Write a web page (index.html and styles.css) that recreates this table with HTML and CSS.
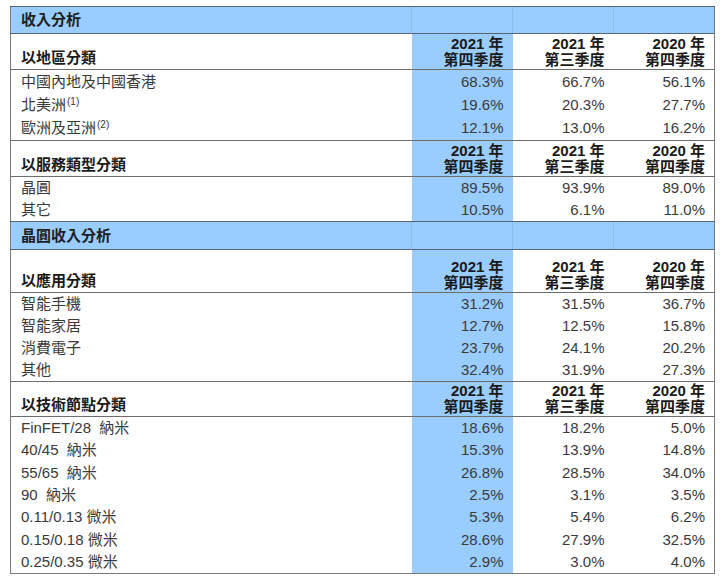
FILE: index.html
```html
<!DOCTYPE html>
<html lang="zh-Hant">
<head>
<meta charset="utf-8">
<title>收入分析</title>
<link rel="stylesheet" href="styles.css">
</head>
<body>
<table class="rev">
  <colgroup>
    <col class="c-label">
    <col class="c-num">
    <col class="c-num">
    <col class="c-num">
  </colgroup>
  <tr class="title t1"><td>收入分析</td><td class="hl"></td><td></td><td></td></tr>
  <tr class="head hd1"><th>以地區分類</th><th class="hl">2021 年<br>第四季度</th><th>2021 年<br>第三季度</th><th>2020 年<br>第四季度</th></tr>
  <tr class="row r1"><td>中國內地及中國香港</td><td class="hl">68.3%</td><td>66.7%</td><td>56.1%</td></tr>
  <tr class="row r1"><td>北美洲<sup>(1)</sup></td><td class="hl">19.6%</td><td>20.3%</td><td>27.7%</td></tr>
  <tr class="row r1"><td>歐洲及亞洲<sup>(2)</sup></td><td class="hl">12.1%</td><td>13.0%</td><td>16.2%</td></tr>
  <tr class="head hd2"><th>以服務類型分類</th><th class="hl">2021 年<br>第四季度</th><th>2021 年<br>第三季度</th><th>2020 年<br>第四季度</th></tr>
  <tr class="row r2"><td>晶圓</td><td class="hl">89.5%</td><td>93.9%</td><td>89.0%</td></tr>
  <tr class="row r2"><td>其它</td><td class="hl">10.5%</td><td>6.1%</td><td>11.0%</td></tr>
  <tr class="title t2"><td>晶圓收入分析</td><td class="hl"></td><td></td><td></td></tr>
  <tr class="head hd3"><th>以應用分類</th><th class="hl">2021 年<br>第四季度</th><th>2021 年<br>第三季度</th><th>2020 年<br>第四季度</th></tr>
  <tr class="row r3"><td>智能手機</td><td class="hl">31.2%</td><td>31.5%</td><td>36.7%</td></tr>
  <tr class="row r3"><td>智能家居</td><td class="hl">12.7%</td><td>12.5%</td><td>15.8%</td></tr>
  <tr class="row r3"><td>消費電子</td><td class="hl">23.7%</td><td>24.1%</td><td>20.2%</td></tr>
  <tr class="row r3"><td>其他</td><td class="hl">32.4%</td><td>31.9%</td><td>27.3%</td></tr>
  <tr class="head hd4"><th>以技術節點分類</th><th class="hl">2021 年<br>第四季度</th><th>2021 年<br>第三季度</th><th>2020 年<br>第四季度</th></tr>
  <tr class="row r4"><td>FinFET/28&nbsp; 納米</td><td class="hl">18.6%</td><td>18.2%</td><td>5.0%</td></tr>
  <tr class="row r4"><td>40/45&nbsp; 納米</td><td class="hl">15.3%</td><td>13.9%</td><td>14.8%</td></tr>
  <tr class="row r4"><td>55/65&nbsp; 納米</td><td class="hl">26.8%</td><td>28.5%</td><td>34.0%</td></tr>
  <tr class="row r4"><td>90&nbsp; 納米</td><td class="hl">2.5%</td><td>3.1%</td><td>3.5%</td></tr>
  <tr class="row r4"><td>0.11/0.13 微米</td><td class="hl">5.3%</td><td>5.4%</td><td>6.2%</td></tr>
  <tr class="row r4"><td>0.15/0.18 微米</td><td class="hl">28.6%</td><td>27.9%</td><td>32.5%</td></tr>
  <tr class="row r4"><td>0.25/0.35 微米</td><td class="hl">2.9%</td><td>3.0%</td><td>4.0%</td></tr>
</table>
</body>
</html>
```

FILE: styles.css
```css
html, body {
  margin: 0;
  padding: 0;
  background: #ffffff;
}

body {
  padding: 6px 0 0 10px;
  font-family: "Liberation Sans", "Noto Sans CJK TC", sans-serif;
  font-size: 15px;
  color: #3a3a3a;
}

.rev {
  border-collapse: collapse;
  table-layout: fixed;
  width: 704px;
  border: 1px solid #7a7a7a;
}

.c-label { width: 401px; }
.c-num { width: 101px; }

.rev td,
.rev th {
  padding: 0 9px 0 10px;
  line-height: 16px;
  white-space: nowrap;
}

.rev td + td,
.rev th + th {
  text-align: right;
}

.hl {
  background: #99ccff;
}

/* blue section titles */
.title td {
  background: #99ccff;
  font-weight: bold;
  color: #1e1e1e;
  border-bottom: 1px solid #5a6470;
  border-top: 1px solid #5a6470;
  vertical-align: middle;
}

.title td + td {
  border-left: 1px solid #8dbde9;
}

.t1 { height: 27px; }
.t2 { height: 28px; }

/* column header rows */
.head th {
  font-weight: bold;
  color: #1a1a1a;
  text-align: left;
  vertical-align: bottom;
  padding-bottom: 1px;
  border-top: 1px solid #6e6e6e;
  border-bottom: 1px solid #6e6e6e;
}

.hd1 { height: 36px; }
.hd2 { height: 36px; }
.hd3 { height: 43px; }
.hd4 { height: 35px; }

.head th:first-child {
  padding-bottom: 3px;
}

/* data rows */
.row td {
  vertical-align: middle;
}

.r1 { height: 23.7px; }
.r2 { height: 22.5px; }
.r3 { height: 22.25px; }
.r4 { height: 22.4px; }

sup {
  font-size: 10px;
  line-height: 0;
  vertical-align: 5px;
  margin-left: 1px;
}
```
